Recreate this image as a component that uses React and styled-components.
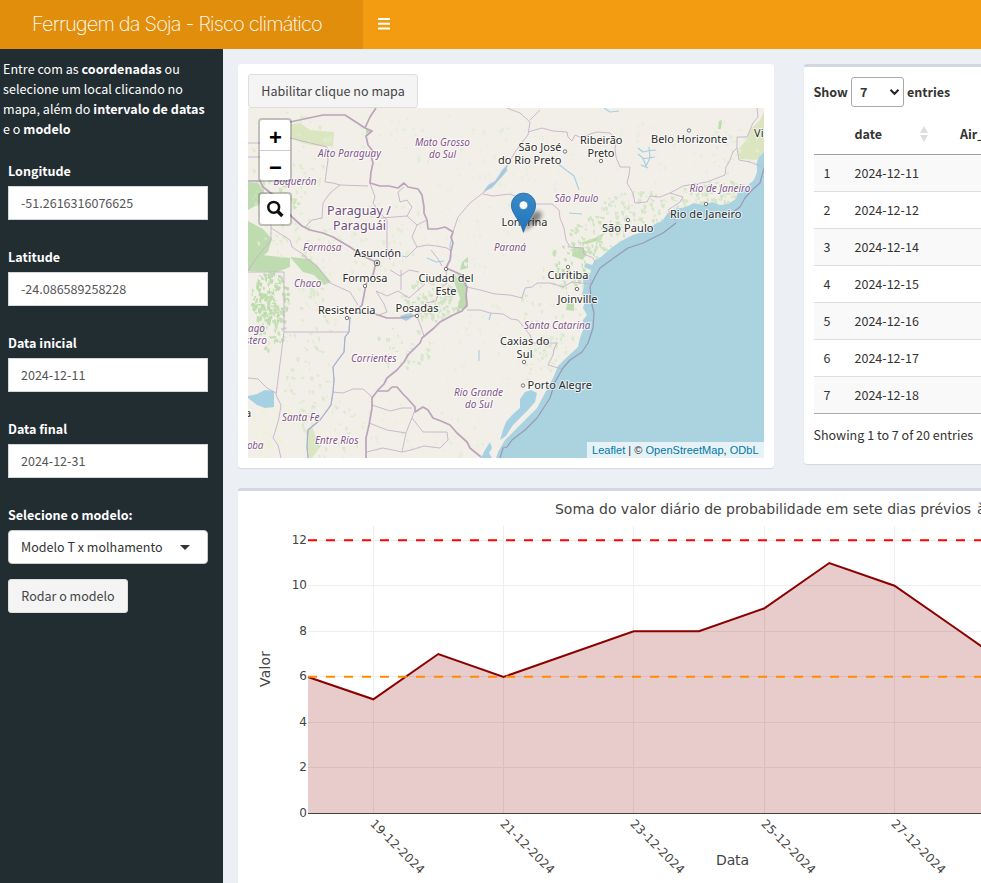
import React from "react";
import styled, { createGlobalStyle } from "styled-components";

const GlobalStyle = createGlobalStyle`
  *, *::before, *::after { box-sizing: border-box; }
  html, body { margin: 0; height: 100%; overflow: hidden; }
  body {
    background: #ecf0f5;
    color: #333;
    font-family: "Noto Sans CJK SC", "Noto Sans", sans-serif;
    font-size: 12.54px;
    line-height: 20px;
  }
  button, input, select { font: inherit; }
`;

const Viewport = styled.div`
  width: 100%;
  height: 883px;
  overflow: hidden;
`;

const Page = styled.div`
  display: flex;
  flex-direction: column;
  width: 1280px;
  height: 883px;
`;

const Header = styled.header`
  display: flex;
  flex: none;
  height: 49px;
  background: #f39c12;
`;

const Logo = styled.div`
  width: 363px;
  padding-left: 32px;
  background: #e08e0b;
  color: #fff;
  font-family: "Inter", "Helvetica Neue", sans-serif;
  font-size: 20px;
  font-weight: 200;
  letter-spacing: -0.83px;
  line-height: 48px;
  white-space: nowrap;
`;

const SidebarToggle = styled.button`
  display: flex;
  align-items: center;
  padding: 0 15px 1px;
  border: 0;
  background: transparent;
`;

const Body = styled.div`
  display: flex;
  flex: 1;
  min-height: 0;
`;

const Sidebar = styled.aside`
  flex: none;
  width: 223px;
  padding-top: 10px;
  background: #222d32;
  color: #fff;
`;

const Intro = styled.p`
  margin: 0 0 22px;
  padding-left: 3px;
  letter-spacing: 0.04px;
  white-space: nowrap;
`;

const Field = styled.label`
  display: flex;
  flex-direction: column;
  gap: 5px;
  width: 200px;
  margin: 0 0 ${(p) => p.$gap ?? 27}px 8px;
  font-weight: 700;
`;

const Input = styled.input`
  width: 100%;
  height: 34px;
  padding: 5px 12px 7px;
  border: 1px solid #d2d6de;
  border-radius: 0;
  background: #fff;
  color: #555;
  font-weight: 400;
`;

const ModelSelect = styled.div`
  display: flex;
  align-items: center;
  justify-content: space-between;
  height: 34px;
  padding: 0 17px 0 12px;
  border: 1px solid #ccc;
  border-radius: 4px;
  background: #fff;
  color: #333;
  font-weight: 400;

  &::after {
    content: "";
    border: 5px solid transparent;
    border-top-color: #333;
    border-bottom: 0;
  }
`;

const Button = styled.button`
  display: block;
  height: 34px;
  width: ${(p) => p.$width}px;
  margin: 0 0 0 ${(p) => p.$indent ?? 0}px;
  padding: 0;
  border: 1px solid #ddd;
  border-radius: 3px;
  background: #f4f4f4;
  color: #444;
`;

const Content = styled.main`
  flex: 1;
  min-width: 0;
  padding: 15px 0 0 15px;
`;

const BoxRow = styled.div`
  display: flex;
  align-items: flex-start;
  gap: 30px;
  margin-bottom: 20px;
`;

const Box = styled.section`
  flex: ${(p) => (p.$width ? "none" : 1)};
  width: ${(p) => (p.$width ? p.$width + "px" : "auto")};
  min-width: 0;
  height: ${(p) => p.$height}px;
  padding: 10px;
  border-top: ${(p) => (p.$accent ? "3px solid #d2d6de" : "0")};
  border-radius: 3px;
  background: #fff;
  box-shadow: 0 1px 1px rgba(0, 0, 0, 0.1);
`;

const MapFrame = styled.div`
  position: relative;
  width: 516px;
  height: 350px;
  overflow: hidden;

  svg { display: block; }
`;

const MapControls = styled.div`
  position: absolute;
  top: 10px;
  left: 10px;
  display: flex;
  flex-direction: column;
  gap: 10px;
`;

const ControlGroup = styled.div`
  border: 2px solid rgba(0, 0, 0, 0.2);
  border-radius: 4px;
  background: #fff;
  background-clip: padding-box;
`;

const ControlButton = styled.button`
  display: flex;
  align-items: center;
  justify-content: center;
  width: 30px;
  height: 30px;
  padding: ${(p) => (p.$lower ? "5px 0 0 1px" : "0 1px 0 0")};
  border: 0;
  background: transparent;
  color: #000;
  font: 700 22px/26px "Liberation Sans", sans-serif;

  & + & { border-top: 1px solid #ccc; }
`;

const Attribution = styled.div`
  position: absolute;
  right: 0;
  bottom: 0;
  width: 177px;
  height: 16px;
  padding-left: 5px;
  background: rgba(255, 255, 255, 0.7);
  color: #333;
  font: 11px/16px "Liberation Sans", Arial, sans-serif;
  letter-spacing: 0.03px;
  white-space: nowrap;

  a { color: #0078a8; text-decoration: none; }
`;

const LengthControl = styled.label`
  display: flex;
  align-items: center;
  gap: 3px;
  height: 30px;
  margin-left: -0.5px;
  font-weight: 700;
`;

const LengthSelect = styled.div`
  display: flex;
  align-items: center;
  justify-content: space-between;
  width: 53px;
  height: 30px;
  padding: 0 3px 0 8px;
  border: 1px solid #aaa;
  border-radius: 3px;
`;

const Table = styled.table`
  width: 620px;
  margin-top: 7px;
  border-collapse: separate;
  border-spacing: 0;
  border-bottom: 1px solid #aaa;
  table-layout: fixed;
`;

const HeadCell = styled.th`
  width: ${(p) => p.$width}px;
  height: 41px;
  padding: 0 3px 0 ${(p) => p.$pad ?? 9.5}px;
  border-bottom: 1px solid #a0a0a0;
  text-align: left;
`;

const HeadLabel = styled.div`
  display: flex;
  align-items: center;
  justify-content: space-between;
  padding-right: 11px;
`;

const Row = styled.tr`
  background: ${(p) => (p.$odd ? "#f9f9f9" : "#fff")};
`;

const Cell = styled.td`
  height: ${(p) => (p.$last ? 36 : 37)}px;
  padding: 0 9.5px;
  border-bottom: ${(p) => (p.$last ? "0" : "1px solid #ddd")};
`;

const TableInfo = styled.div`
  margin: 11px 0 0 -0.5px;
`;

const ChartSvg = styled.svg`
  display: block;
  font-family: "DejaVu Sans", Verdana, sans-serif;
  font-size: 12px;
  fill: #444;
`;

/* ---------- map ---------- */

const OCEAN =
  "M764 152L759 157L756.7 163L757 172L754 180L746 187L738 192L736 199L728 204L720 205L712 202L703 205L694 203L686 207L675 209L668 213L662 221L655 224L646 231L633 235L621 241L610 249L601 257L595 260L592 265L586 263L584 267L591 270L590 275L583 279L584 287L582 294L585 301L583 308L587 315L583 320L583 330L580 338L578 347L567 357L558 366L553 378L545 393L537 408L523 422L513 432L505 440L498 452L496 458H764Z";

const LAKES = [
  "M525 392L531 390L537 393L535 402L528 410L520 418L513 425L506 436L500 440L503 430L506 422L512 415L520 408L520 399Z",
  "M490 442L492 448L489 453L492 458H481L485 450Z",
  "M248 396L257 394L265 390L274 391L274 407L265 408L257 405L248 398Z",
  "M400 316L406 314L412 313L413 317L406 321L402 319Z",
  "M483 192L488 185L495 181L502 170L507 165L507 171L500 179L492 188Z",
];

const NATIONAL = [
  "M248 181H260L263 187L272 194L292 217L302 226L310 230L323 233L333 237L350 247L365 257L376 262L373 275L366 284L364 295L362 305L354 313L363 313L375 314L387 318L400 318L408 317L417 315",
  "M290 122L323 115H345L365 128L370 117L376 108",
  "M365 128L372 131L366 136L368 145L372 150L371 156L373 163L371 172L370 183L380 186L389 186L398 188L404 183L408 187L418 189L422 195L424 207L424 213L427 220L428 229L437 229L445 227L453 232L451 237L453 243L451 251L450 260L446 268L453 271L462 275L464 282L467 287L466 296L467 305L462 311L453 315L440 322L434 328L422 338L420 343L408 355L404 362L397 370L387 378L384 384L378 390L372 398L372 408L369 425L366 438L366 458",
  "M378 391L388 391L392 387L397 387L403 394L407 398L415 407L415 412L423 407L428 410L433 418L441 421L450 425L457 433L467 442L470 448L481 457",
];

const STATES = [
  "M453 232L458 217L464 210L470 203L483 193L500 178L507 166L515 152L523 141L528 135L530 122L520 113L507 108M530 120L535 115L540 110",
  "M528 132L542 128L553 131L567 132L568 137L572 141L575 135L582 138L590 134L597 132L610 133L617 140L615 148L616 157L620 167L630 167L629 175L627 183L633 193L635 203L647 202L650 196L660 197L670 193L683 186L695 184L707 182L725 175L726 167L730 160L733 152L737 148V137H747L753 123L758 117L757 108",
  "M737 148L739 160L750 162L763 167M670 193L683 197L680 202L668 210L673 217L677 223",
  "M483 194L493 196L510 194L522 199L537 204L552 204L559 210L560 218L564 228L566 240L570 247L583 248L584 254L593 258L596 264",
  "M467 310L480 310L490 313L503 314L511 319L518 320L530 335L533 343H557L554 349L553 355L548 365L562 369",
  "M467 287L480 290L495 294L510 295L522 298L525 288L532 287L537 283L550 283L563 287L572 282L590 284L591 278",
  "M248 272H284V332H348M284 332L276 395L281 405L279 418L275 432L273 438L278 445L281 458M248 378L258 379L267 388L276 393",
  "M333 392L343 393L353 389L363 389L372 397",
  "M372 405L390 411L402 408L412 408M369 423L387 430L406 433L409 425L412 418L414 412M367 452L383 448L402 452L406 433M412 418L423 432H447L448 440L440 448L424 446L411 450L402 452",
  "M290 138L327 147L328 160L325 182L333 183L340 185L368 186M340 185L330 193L323 203L322 218L312 220L305 227",
  "M370 183L375 197L373 203L380 213L387 220L387 247L390 260M381 218L407 216L412 207L407 200L400 202L398 192L404 187M407 216L417 225L412 237L417 247L407 257L402 256M417 225L427 220M417 247L427 245L437 246L447 248L451 251",
  "M390 270L400 276L409 270L419 272M376 291L387 296L398 291L409 298L425 284M376 291L384 304L387 312L379 315M417 315L426 303L436 301L440 289L447 283L446 270M417 316L421 327L424 336M401 270L401 290M431 250L438 259L442 266",
  "M271 225L271 240L255 260L248 271M271 228L290 240L292 247L307 257M302 255L317 266L330 283L350 292L358 305M248 143H260M248 157H260",
];

const RIVERS = [
  "M350 317L349 332L345 337L344 352L338 360L333 367L334 380L333 392L331 405L320 420L308 430L307 446L308 458",
  "M453 232L450 246L451 258L446 268",
  "M557 163L566 170L574 176L579 190",
  "M638 148L643 152L647 151L656 150M638 154L643 158L646 166L650 158L649 147M642 159L655 157M641 165L648 168",
  "M604 108L610 112L619 111M569 213L582 214",
  "M427 258L436 262L444 261M479 361V350M489 320L491 313",
];

const MARITIME =
  "M764 168L760 183L752 190L745 198L740 207L730 214M676 223L663 233L643 243L628 248L618 255L600 268L595 277L590 287L592 305L594 313L593 328L588 343L582 352L570 360L563 368L555 382L550 398L537 418L525 430L512 440L507 447L503 448L500 458";

const FORESTS = [
  "M248 182L258 183L264 190L262 202L248 210Z",
  "M248 221L263 229L272 239L268 252L260 258L252 270L262 255L290 258L290 267L277 272L248 271Z",
  "M290 257L310 259L320 269L331 282L324 285L314 275L303 272Z",
  "M456 272L466 278L468 307L456 313L460 298L454 282Z",
  "M462 262L468 257V268L460 270Z",
  "M595 238L604 233L601 240L586 244L580 243Z",
  "M573 247L581 247L587 252L583 260L572 256Z",
  "M567 303L574 303V311L566 310Z",
  "M719 121L722 120L721 129L718 129Z",
  "M366 128L371 131L366 134Z",
];

const MEADOWS = [
  "M291 124L300 123L310 130L334 132L333 146L317 146L302 143L291 138Z",
  "M738 150L747 139L750 130L760 120L764 112V152L757 160L740 159Z",
  "M306 431L312 427L317 439L321 446L312 458H309Z",
];

const SPECKLES = [
  [292, 155, 42, 45, 70, "#dfeccb"],
  [274, 195, 25, 25, 60, "#cfe3bd"],
  [300, 235, 45, 23, 50, "#e0ecd0"],
  [269, 296, 19, 26, 150, "#bcdcab"],
  [269, 325, 19, 26, 70, "#c4dfb5"],
  [306, 350, 27, 75, 75, "#dbeacd"],
  [385, 235, 48, 34, 50, "#e2edd6"],
  [430, 298, 29, 22, 110, "#d2e4c4"],
  [402, 345, 29, 25, 32, "#d6e7ca"],
  [330, 430, 29, 35, 45, "#dbeacd"],
  [470, 220, 44, 60, 60, "#e9eee0"],
  [575, 263, 27, 26, 85, "#c6e0b8"],
  [553, 312, 35, 48, 70, "#dbe9d0"],
  [645, 206, 45, 16, 110, "#d6e6ca"],
  [715, 191, 34, 12, 75, "#d2e5c4"],
  [595, 233, 30, 18, 65, "#cce3bd"],
  [545, 365, 22, 32, 40, "#dfebd4"],
  [420, 430, 65, 35, 40, "#e4eed9"],
  [600, 165, 120, 46, 90, "#e8eedf"],
  [440, 135, 90, 25, 35, "#e3eeda"],
  [480, 345, 50, 45, 45, "#e8eedf"],
  [275, 430, 25, 27, 50, "#eef2d2"],
  [340, 285, 42, 38, 30, "#e4eed9"],
  [732, 145, 25, 30, 30, "#e2edd6"],
];

function specklePath(cx, cy, rx, ry, count) {
  let seed = Math.round(cx * 31 + cy * 17);
  const next = () => {
    seed = (seed * 16807) % 2147483647;
    return seed / 2147483647;
  };
  let d = "";
  for (let i = 0; i < count; i += 1) {
    const angle = next() * Math.PI * 2;
    const radius = Math.sqrt(next());
    const x = cx + Math.cos(angle) * rx * radius;
    const y = cy + Math.sin(angle) * ry * radius;
    const w = 1 + next() * 3.5;
    const h = 1 + next() * 3.5;
    d += `M${x.toFixed(1)} ${y.toFixed(1)}l${w.toFixed(1)} ${(h * 0.3).toFixed(1)}l${(-w * 0.3).toFixed(1)} ${h.toFixed(1)}l${(-w * 0.6).toFixed(1)} ${(-h * 0.4).toFixed(1)}z`;
  }
  return d;
}

/* text, left, right, baseline */
const REGION_LABELS = [
  ["Alto Paraguay", 318, 381, 157],
  ["Mato Grosso", 415, 470, 146],
  ["do Sul", 429, 456, 158],
  ["Boquerón", 273.5, 316.5, 185],
  ["Formosa", 303, 341.5, 251],
  ["Chaco", 294, 321.5, 287],
  ["Corrientes", 351, 396.5, 362],
  ["ago", 248, 265, 332],
  ["stero", 245, 267, 344],
  ["Santa Fe", 282, 319.5, 421],
  ["Entre Ríos", 315, 358.5, 444],
  ["oba", 247, 263.5, 449],
  ["Rio Grande", 454, 503, 396],
  ["do Sul", 465, 492.5, 408],
  ["Rio de Janeiro", 689.5, 750.5, 191.5],
  ["São Paulo", 554.5, 598.5, 201.5],
  ["Paraná", 494, 526, 250.5],
  ["Santa Catarina", 524, 590.5, 328.5],
];

const CITY_LABELS = [
  ["Asunción", 354, 401, 257],
  ["Formosa", 342.5, 387.5, 282],
  ["Resistencia", 318, 375.5, 314],
  ["Posadas", 395.5, 438.5, 312],
  ["Ciudad del", 418.5, 473.5, 281.5],
  ["Este", 435.5, 456.5, 295],
  ["a", 245, 250.5, 417],
  ["São José", 518.5, 561.5, 150.5],
  ["do Rio Preto", 498, 561.5, 164],
  ["Ribeirão", 580, 622.5, 143.5],
  ["Preto", 587.5, 614.5, 157],
  ["Belo Horizonte", 651, 727.5, 142.5],
  ["Vi", 754, 763.5, 136.5],
  ["Rio de Janeiro", 670, 741.5, 217.5],
  ["São Paulo", 602, 653.5, 232],
  ["Londrina", 501.5, 547.5, 226],
  ["Curitiba", 547.5, 588.5, 279],
  ["Joinville", 557.5, 597.5, 302.5],
  ["Caxias do", 500, 549.5, 345],
  ["Sul", 516.5, 532.5, 358],
  ["Porto Alegre", 527.5, 592, 389],
];

const CITY_DOTS = [
  [565, 151.5], [601, 161], [689, 130.5], [706, 204], [628, 220], [568, 267],
  [577, 289], [524, 362], [523, 385.5], [365, 286], [347, 318], [417, 316],
  [446, 269],
];

const RegionText = styled.text`
  fill: #82548a;
  font: italic 10px "Noto Sans", sans-serif;
`;

const CountryText = styled.text`
  fill: #6f4d7c;
  font: 12.5px "Noto Sans", sans-serif;
`;

const CityText = styled.text`
  fill: #2b2b2b;
  font: 11px "Noto Sans", sans-serif;
`;

const Halo = styled.g`
  paint-order: stroke;
  stroke: rgba(255, 255, 255, 0.65);
  stroke-width: 2.2px;
  stroke-linejoin: round;
`;

function Labels({ as: Text, items }) {
  return items.map(([text, left, right, y]) => (
    <Text key={text + left} x={left} y={y} textLength={right - left}>
      {text}
    </Text>
  ));
}

function MapDrawing() {
  return (
    <svg width="516" height="350" viewBox="248 108 516 350">
      <defs>
        <linearGradient id="pin" x1="0" y1="0" x2="0" y2="1">
          <stop offset="0" stopColor="#3b8ac9" />
          <stop offset="1" stopColor="#1f74bd" />
        </linearGradient>
        <filter id="soft" x="-50%" y="-50%" width="200%" height="200%">
          <feGaussianBlur stdDeviation="2" />
        </filter>
      </defs>
      <rect x="248" y="108" width="516" height="350" fill="#f2efe9" />
      {MEADOWS.map((d) => <path key={d} d={d} fill="#dbe6c1" />)}
      {FORESTS.map((d) => <path key={d} d={d} fill="#bfdcb0" />)}
      {SPECKLES.map(([cx, cy, rx, ry, n, color]) => (
        <path key={`${cx}-${cy}`} d={specklePath(cx, cy, rx, ry, n)} fill={color} />
      ))}
      <path d={OCEAN} fill="#aad3df" />
      {LAKES.map((d) => <path key={d} d={d} fill="#a5d1e3" />)}
      <g fill="none" strokeLinejoin="round">
        {RIVERS.map((d) => <path key={d} d={d} stroke="#a5cfe2" strokeWidth="1.1" />)}
        <path d={RIVERS[0]} stroke="#aeacca" strokeWidth="1.1" />
        {STATES.map((d) => <path key={d} d={d} stroke="#c5b2c9" strokeWidth="0.9" />)}
        {NATIONAL.map((d) => <path key={d} d={d} stroke="#bba4bc" strokeWidth="1.7" />)}
        <path d={MARITIME} stroke="#9698b8" strokeWidth="1.2" />
      </g>
      <g fill="#fff" stroke="#555" strokeWidth="0.8">
        {CITY_DOTS.map(([x, y]) => <circle key={`${x}-${y}`} cx={x} cy={y} r="1.7" />)}
        <circle cx="377" cy="263" r="2.8" />
        <circle cx="377" cy="263" r="1" fill="#333" />
      </g>
      <Halo>
        <Labels as={RegionText} items={REGION_LABELS} />
        <CountryText x="327" y="214.5" textLength="64">Paraguay /</CountryText>
        <CountryText x="333" y="229.5" textLength="53">Paraguái</CountryText>
        <Labels as={CityText} items={CITY_LABELS} />
      </Halo>
      <path d="M524 231L530 216Q535 209 541 212Q544 216 537 222Z" fill="#000" opacity="0.45" filter="url(#soft)" />
      <path
        d="M523.5 232.3C521.5 225 518 220.5 514.5 214.5C512.6 211.2 511.4 208.5 511.4 205.2A12.1 12.1 0 0 1 535.6 205.2C535.6 208.5 534.4 211.2 532.5 214.5C529 220.5 525.5 225 523.5 232.3Z"
        fill="url(#pin)" stroke="#2c6ca3" strokeWidth="0.9"
      />
      <circle cx="523.5" cy="205.2" r="4.3" fill="#fff" stroke="#2a72ae" strokeWidth="0.6" />
    </svg>
  );
}

function MapPanel() {
  return (
    <MapFrame>
      <MapDrawing />
      <MapControls>
        <ControlGroup>
          <ControlButton $lower>+</ControlButton>
          <ControlButton $lower>−</ControlButton>
        </ControlGroup>
        <ControlGroup>
          <ControlButton aria-label="search">
            <svg width="18" height="18" viewBox="0 0 18 18" fill="none" stroke="#111">
              <circle cx="7.7" cy="7.3" r="5.4" strokeWidth="2.5" />
              <path d="M11.6 11.2L16.4 16" strokeWidth="3.4" />
            </svg>
          </ControlButton>
        </ControlGroup>
      </MapControls>
      <Attribution>
        <a>Leaflet</a> | © <a>OpenStreetMap</a>, <a>ODbL</a>
      </Attribution>
    </MapFrame>
  );
}

/* ---------- table ---------- */

const DATES = [
  "2024-12-11", "2024-12-12", "2024-12-14", "2024-12-15",
  "2024-12-16", "2024-12-17", "2024-12-18",
];

function DataTable() {
  return (
    <>
      <LengthControl>
        Show
        <LengthSelect>
          7
          <svg width="11" height="8" viewBox="0 0 11 8" fill="none" stroke="#222" strokeWidth="2">
            <path d="M1.5 1.8L5.5 5.8L9.5 1.8" />
          </svg>
        </LengthSelect>
        entries
      </LengthControl>
      <Table>
        <thead>
          <tr>
            <HeadCell $width={31} />
            <HeadCell $width={97}>
              <HeadLabel>
                date
                <svg width="8" height="16" viewBox="0 0 8 16" fill="#dedede">
                  <path d="M4 0L8 7H0ZM0 9H8L4 16Z" />
                </svg>
              </HeadLabel>
            </HeadCell>
            <HeadCell $pad={18}>Air_temp</HeadCell>
          </tr>
        </thead>
        <tbody>
          {DATES.map((date, i) => {
            const last = i === DATES.length - 1;
            return (
              <Row key={date} $odd={i % 2 === 0}>
                <Cell $last={last}>{i + 1}</Cell>
                <Cell $last={last}>{date}</Cell>
                <Cell $last={last} />
              </Row>
            );
          })}
        </tbody>
      </Table>
      <TableInfo>Showing 1 to 7 of 20 entries</TableInfo>
    </>
  );
}

/* ---------- chart ---------- */

const Y_TICKS = [[12, 540.5], [10, 585.5], [8, 631.5], [6, 676.5], [4, 722.5], [2, 767.5], [0, 813.5]];
const X_TICKS = [
  ["19-12-2024", 373.5], ["21-12-2024", 503.5], ["23-12-2024", 633.5],
  ["25-12-2024", 764.5], ["27-12-2024", 894.5], ["29-12-2024", 1024.5],
];
const SERIES = "308,677 373.3,699.3 438.3,654 503.5,677 633.7,631.3 699,631.3 764,608.5 829.3,563 894.5,585.7 960,631.3 1025,677 1280,677";

function Chart() {
  return (
    <ChartSvg width="1022" height="382" viewBox="248 501 1022 382">
      <text x="555" y="514" fontSize="14" textLength="416">
        Soma do valor diário de probabilidade em sete dias prévios
      </text>
      <text x="977" y="514" fontSize="14">à data</text>
      <g stroke="#eee">
        {Y_TICKS.map(([v, y]) => <line key={v} x1="308" x2="1270" y1={y} y2={y} />)}
        {X_TICKS.map(([label, x]) => <line key={label} x1={x} x2={x} y1="526" y2="813" />)}
      </g>
      <polygon points={`308,813 ${SERIES} 1280,813`} fill="rgba(139,0,0,0.2)" />
      <polyline points={SERIES} fill="none" stroke="#8b0000" strokeWidth="2" />
      <g strokeWidth="2" strokeDasharray="9 9">
        <line x1="308" x2="1270" y1="540.3" y2="540.3" stroke="#f00" />
        <line x1="308" x2="1270" y1="676.8" y2="676.8" stroke="#ff8c00" />
      </g>
      <line x1="308" x2="1270" y1="813.5" y2="813.5" stroke="#444" />
      {Y_TICKS.map(([v, y]) => (
        <text key={v} x="307" y={y + 3.9} textAnchor="end">{v}</text>
      ))}
      {X_TICKS.map(([label, x]) => (
        <text key={label} transform={`translate(${x - 4} 824.5) rotate(45)`} textLength="71">
          {label}
        </text>
      ))}
      <text x="716" y="865" fontSize="14" textLength="33">Data</text>
      <text transform="translate(270 687) rotate(-90)" fontSize="14" textLength="36">Valor</text>
    </ChartSvg>
  );
}

/* ---------- page ---------- */

export default function App() {
  return (
    <Viewport>
      <GlobalStyle />
      <Page>
        <Header>
          <Logo>Ferrugem da Soja - Risco climático</Logo>
          <SidebarToggle aria-label="menu">
            <svg width="12" height="12" viewBox="0 0 12 12" fill="#fff">
              <path d="M0 0H12V2H0ZM0 4.7H12V6.8H0ZM0 9.4H12V11.4H0Z" />
            </svg>
          </SidebarToggle>
        </Header>
        <Body>
          <Sidebar>
            <Intro>
              Entre com as <b>coordenadas</b> ou
              <br />
              selecione um local clicando no
              <br />
              mapa, além do <b>intervalo de datas</b>
              <br />
              e o <b>modelo</b>
            </Intro>
            <Field>Longitude<Input defaultValue="-51.2616316076625" /></Field>
            <Field>Latitude<Input defaultValue="-24.086589258228" /></Field>
            <Field>Data inicial<Input defaultValue="2024-12-11" /></Field>
            <Field>Data final<Input defaultValue="2024-12-31" /></Field>
            <Field as="div" $gap={15}>
              Selecione o modelo:
              <ModelSelect>Modelo T x molhamento</ModelSelect>
            </Field>
            <Button $width={120} $indent={8}>Rodar o modelo</Button>
          </Sidebar>
          <Content>
            <BoxRow>
              <Box $width={536} $height={404}>
                <Button $width={170}>Habilitar clique no mapa</Button>
                <MapPanel />
              </Box>
              <Box $accent $height={400}>
                <DataTable />
              </Box>
            </BoxRow>
            <Box $accent $height={420}>
              <Chart />
            </Box>
          </Content>
        </Body>
      </Page>
    </Viewport>
  );
}
